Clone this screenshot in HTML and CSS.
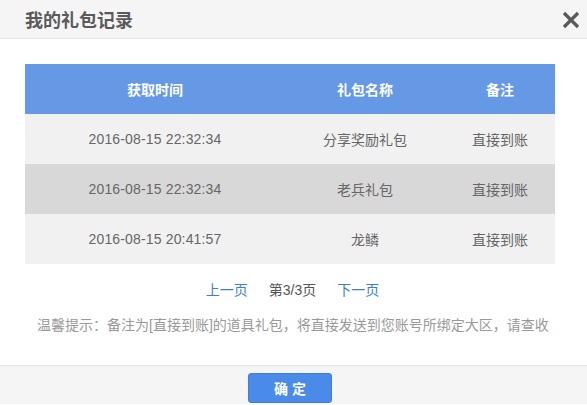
FILE: index.html
```html
<!DOCTYPE html>
<html>
<head>
    <meta charset="utf-8">
    <title>我的礼包记录</title>
    <link rel="stylesheet" href="styles.css">
</head>
<body>
    <div class="dialog">
        <div class="dialogHead">
            <h2>我的礼包记录</h2>
            <svg class="close" width="18" height="18" viewBox="0 0 18 18">
                <path d="M2 2 L16 16 M16 2 L2 16" stroke="#5a5a5a" stroke-width="3.2" fill="none"/>
            </svg>
        </div>
        <div class="dialogBody">
            <table class="records">
                <thead>
                    <tr>
                        <th class="colTime">获取时间</th>
                        <th class="colName">礼包名称</th>
                        <th class="colNote">备注</th>
                    </tr>
                </thead>
                <tbody>
                    <tr>
                        <td class="time">2016-08-15 22:32:34</td>
                        <td>分享奖励礼包</td>
                        <td>直接到账</td>
                    </tr>
                    <tr class="hover">
                        <td class="time">2016-08-15 22:32:34</td>
                        <td>老兵礼包</td>
                        <td>直接到账</td>
                    </tr>
                    <tr>
                        <td class="time">2016-08-15 20:41:57</td>
                        <td>龙鳞</td>
                        <td>直接到账</td>
                    </tr>
                </tbody>
            </table>
            <div class="pager">
                <a href="#">上一页</a>
                <span>第3/3页</span>
                <a href="#">下一页</a>
            </div>
            <p class="tips">温馨提示：备注为[直接到账]的道具礼包，将直接发送到您账号所绑定大区，请查收</p>
        </div>
        <div class="dialogFoot">
            <button>确 定</button>
        </div>
    </div>
</body>
</html>
```

FILE: styles.css
```css
body {
    margin: 0px;
    padding: 0px;
    background-color: white;
    font: 14px "Liberation Sans", "Noto Sans CJK SC", sans-serif;
    color: #666;
}

.dialogHead {
    height: 38px;
    background-color: #f5f5f5;
    border-bottom: 1px solid #e6e6e6;
    display: flex;
    align-items: center;
    justify-content: space-between;
    padding: 0px 7px 0px 25px;
}

    .dialogHead h2 {
        margin: 0px;
        font-size: 18px;
        font-weight: bold;
        color: #5a5a5a;
    }

.close {
    cursor: pointer;
    margin-top: 2px;
}

.dialogBody {
    width: 580px;
    height: 326px;
    padding-top: 25px;
    box-sizing: border-box;
}

.records {
    width: 530px;
    margin-left: 25px;
    border-collapse: collapse;
    text-align: center;
}

    .records th {
        height: 50px;
        padding: 0px;
        background-color: #6599e5;
        color: white;
        font-weight: bold;
    }

    .records td {
        height: 50px;
        padding: 0px;
        background-color: #f1f1f1;
    }

    .records td.time {
        letter-spacing: 0.15px;
    }

    .records tr.hover td {
        background-color: #d9d8d8;
    }

.colTime { width: 260px; }
.colName { width: 160px; }
.colNote { width: 110px; }

.pager {
    display: flex;
    justify-content: center;
    gap: 21px;
    margin-top: 16px;
    padding-left: 5px;
    line-height: 20px;
    color: #555;
}

    .pager a {
        color: #3a7fd5;
        text-decoration: none;
    }

.tips {
    margin: 15px 0px 0px 37px;
    line-height: 20px;
    color: #999;
    white-space: nowrap;
}

.dialogFoot {
    height: 39px;
    background-color: #f5f5f5;
    border-top: 1px solid #e6e6e6;
    padding-right: 7px;
    display: flex;
    justify-content: center;
    align-items: flex-start;
    padding-top: 7px;
    box-sizing: border-box;
}

    .dialogFoot button {
        width: 84px;
        height: 30px;
        background-color: #4a8ae8;
        border: 1px solid #3f7fdc;
        border-radius: 3px;
        color: white;
        font: bold 14px "Liberation Sans", "Noto Sans CJK SC", sans-serif;
        cursor: pointer;
    }
```
